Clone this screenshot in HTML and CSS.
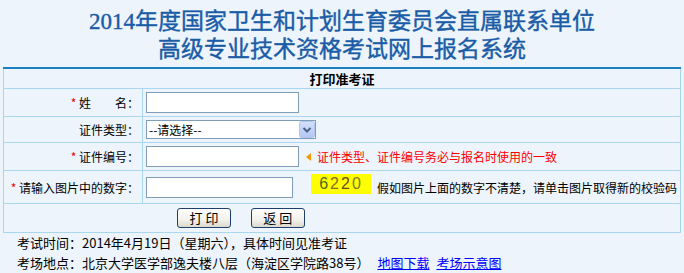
FILE: index.html
```html
<!DOCTYPE html>
<html lang="zh-CN">
  <head>
    <meta charset="UTF-8" />
    <title>打印准考证</title>
    <link rel="stylesheet" href="styles.css">
  </head>
  <body>
    <div class="title">
      <div>2014年度国家卫生和计划生育委员会直属联系单位</div>
      <div>高级专业技术资格考试网上报名系统</div>
    </div>

    <table class="form">
      <colgroup>
        <col class="col-label" />
        <col />
      </colgroup>
      <tr class="row-head">
        <th colspan="2">打印准考证</th>
      </tr>
      <tr class="row-a">
        <td class="label"><span class="req">*</span> 姓　　名：</td>
        <td class="field">
          <div class="line"><input type="text" class="text" /></div>
        </td>
      </tr>
      <tr class="row-b">
        <td class="label">证件类型：</td>
        <td class="field">
          <div class="line">
            <span class="select-wrap">
              <select class="select">
                <option>--请选择--</option>
                <option>身份证</option>
                <option>军官证</option>
              </select>
              <span class="drop">
                <svg width="16" height="17" viewBox="0 0 16 17">
                  <defs>
                    <linearGradient id="dg" x1="0" y1="0" x2="0" y2="1">
                      <stop offset="0" stop-color="#d4e1fc" />
                      <stop offset="1" stop-color="#b3c7f5" />
                    </linearGradient>
                  </defs>
                  <rect x="0.5" y="0.5" width="15" height="16" rx="2" fill="url(#dg)" stroke="#b1c4ee" />
                  <path d="M4.5 7 L8 10.5 L11.5 7" fill="none" stroke="#4d6185" stroke-width="2" />
                </svg>
              </span>
            </span>
          </div>
        </td>
      </tr>
      <tr class="row-a">
        <td class="label"><span class="req">*</span> 证件编号：</td>
        <td class="field">
          <div class="line">
            <input type="text" class="text" />
            <span class="tip"><i class="arrow"></i>证件类型、证件编号务必与报名时使用的一致</span>
          </div>
        </td>
      </tr>
      <tr class="row-c">
        <td class="label"><span class="req">*</span> 请输入图片中的数字：</td>
        <td class="field">
          <div class="line">
            <input type="text" class="text short" />
            <span class="captcha"><b class="d1">6</b><b class="d2">2</b><b class="d3">2</b><b class="d4">0</b></span>
            <span class="hint">假如图片上面的数字不清楚，请单击图片取得新的校验码</span>
          </div>
        </td>
      </tr>
      <tr class="row-d">
        <td colspan="2" class="actions">
          <button class="btn">打 印</button>
          <button class="btn">返 回</button>
        </td>
      </tr>
    </table>

    <div class="notes">
      <div>考试时间：2014年4月19日（星期六），具体时间见准考证</div>
      <div>考场地点：北京大学医学部逸夫楼八层（海淀区学院路38号）<a href="#" class="map">地图下载</a><a href="#">考场示意图</a></div>
    </div>
  </body>
</html>
```

FILE: styles.css
```css
html,
body {
  margin: 0;
  padding: 0;
  height: 100%;
  background: #edf4fc;
  font-family: "Noto Sans CJK SC", sans-serif;
  color: #000;
}

.title {
  padding-top: 8px;
  height: 59px;
  text-align: center;
  font-family: "Liberation Serif", "Noto Sans CJK SC", serif;
  font-size: 23px;
  font-weight: normal;
  line-height: 28px;
  color: #1a5ca6;
  -webkit-text-stroke: 0.4px #1a5ca6;
}

.form {
  margin: 0 3px;
  width: 678px;
  border-collapse: collapse;
  table-layout: fixed;
  border-top: 2px solid #1a80c0;
  font-size: 12px;
}

.form .col-label {
  width: 139px;
}

.form th,
.form td {
  border: 1px solid #a9d7ef;
  padding: 0;
}

.form .row-head th {
  border-top: 2px solid #1a80c0;
  height: 19px;
  font-size: 13px;
  font-weight: bold;
  text-align: center;
}

.row-a td {
  height: 27px;
}

.row-b td {
  height: 25px;
}

.row-c td {
  height: 32px;
}

.row-d td {
  height: 28px;
}

.label {
  text-align: right;
  padding-right: 3px !important;
  white-space: nowrap;
}

.req {
  color: #e00;
}

.field {
  padding-left: 3px !important;
}

.line {
  display: flex;
  align-items: center;
}

.text {
  box-sizing: border-box;
  width: 153px;
  height: 21px;
  margin: 0;
  border: 1px solid #7f9db9;
  background: #fff;
  padding: 0 3px;
}

.text.short {
  width: 147px;
}

.select-wrap {
  position: relative;
  display: inline-block;
}

.select {
  box-sizing: border-box;
  appearance: none;
  -webkit-appearance: none;
  width: 170px;
  height: 19px;
  margin: 0;
  border: 1px solid #7f9db9;
  border-radius: 0;
  background: #fff;
  padding: 0 2px;
  font-family: "Noto Sans CJK SC", sans-serif;
  font-size: 12px;
  line-height: 17px;
  color: #000;
}

.drop {
  position: absolute;
  top: 1px;
  right: 1px;
  height: 17px;
  pointer-events: none;
}

.drop svg {
  display: block;
}

.tip {
  display: flex;
  align-items: center;
  margin-left: 7px;
  color: #f00;
}

.arrow {
  width: 0;
  height: 0;
  border-top: 4px solid transparent;
  border-bottom: 4px solid transparent;
  border-right: 5px solid #f39800;
  margin-right: 6px;
}

.captcha {
  display: flex;
  align-items: center;
  justify-content: center;
  width: 60px;
  height: 20px;
  margin-left: 18px;
  margin-top: -6px;
  background: #ffff00;
  font-family: "Liberation Sans", sans-serif;
  font-size: 16px;
  letter-spacing: 2px;
}

.captcha b {
  font-weight: normal;
}

.captcha .d1 {
  color: #4f6a1c;
}

.captcha .d2 {
  color: #8a6a1e;
}

.captcha .d3 {
  color: #6b4a1e;
}

.captcha .d4 {
  color: #7d7a2a;
}

.hint {
  margin-left: 6px;
}

.actions {
  padding-left: 173px !important;
}

.btn {
  box-sizing: border-box;
  width: 54px;
  height: 20px;
  margin: 0 17px 0 0;
  padding: 0;
  border: 1px solid #1f3f6e;
  border-radius: 3px;
  background: linear-gradient(#ffffff, #f2f1ec 60%, #dcd8cd);
  font-family: "Noto Sans CJK SC", sans-serif;
  font-size: 13px;
  line-height: 18px;
  color: #000;
}

.notes {
  padding-left: 17px;
  font-size: 13px;
  line-height: 20px;
}

.notes a {
  color: #00f;
  text-decoration: underline;
  margin-left: 7px;
}

.notes a.map {
  margin-left: 8px;
}
```
